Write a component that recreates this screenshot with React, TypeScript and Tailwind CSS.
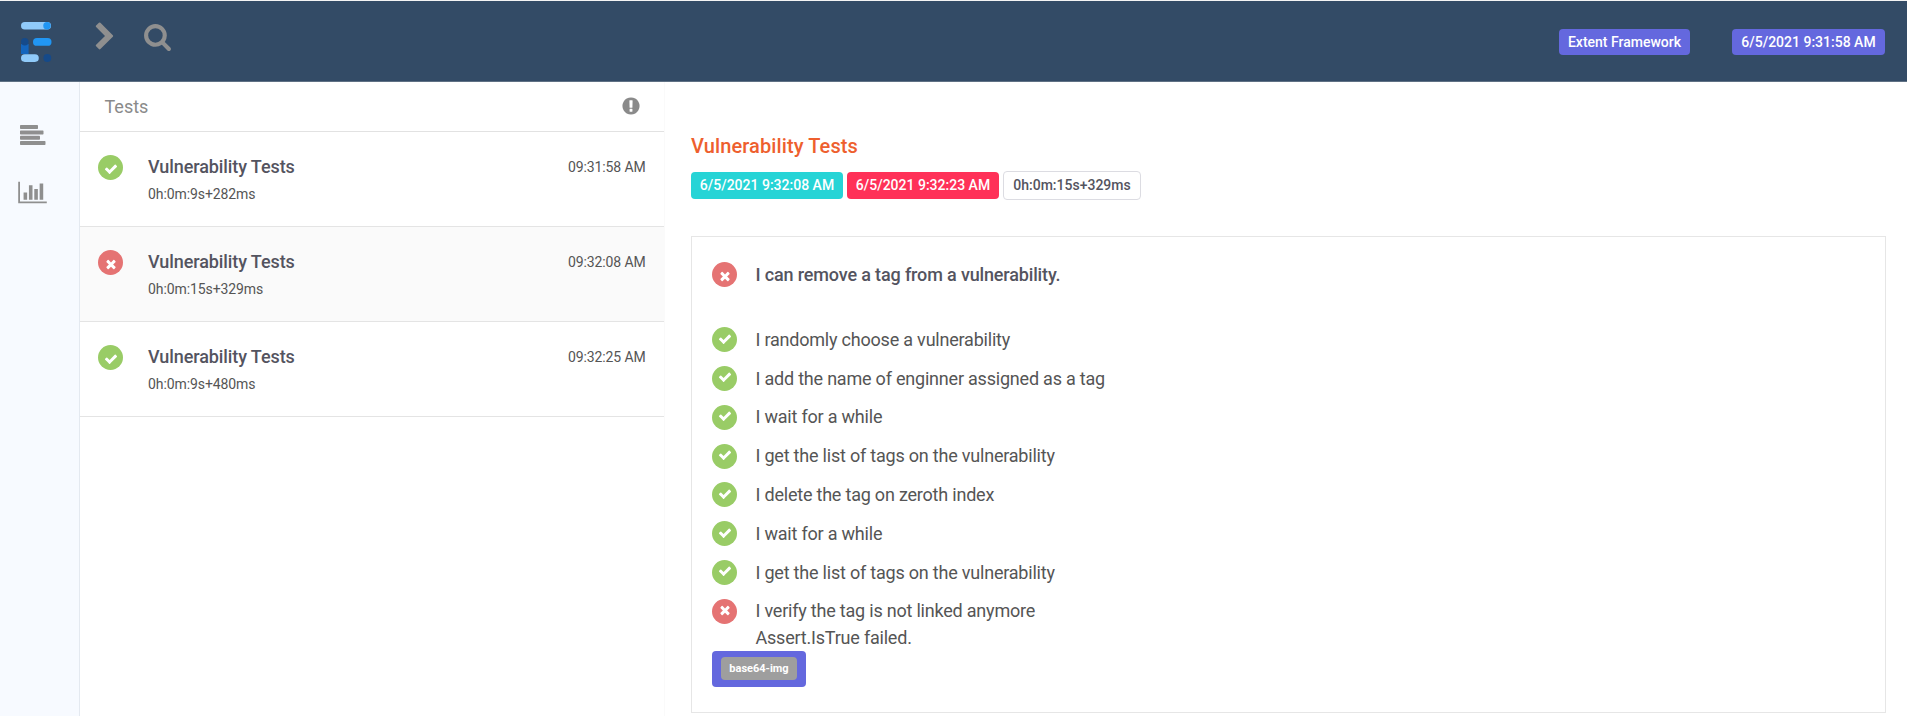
import type { ReactNode } from "react";

const CHECK =
  "M1671 566q0 40-28 68l-724 724-136 136q-28 28-68 28t-68-28l-136-136-362-362q-28-28-28-68t28-68l136-136q28-28 68-28t68 28l294 295 656-657q28-28 68-28t68 28l136 136q28 28 28 68z";
const TIMES =
  "M1490 1322q0 40-28 68l-136 136q-28 28-68 28t-68-28l-294-294-294 294q-28 28-68 28t-68-28l-136-136q-28-28-28-68t28-68l294-294-294-294q-28-28-28-68t28-68l136-136q28-28 68-28t68 28l294 294 294-294q28-28 68-28t68 28l136 136q28 28 28 68t-28 68l-294 294 294 294q28 28 28 68z";
const CHEVRON =
  "M1363 877l-742 742q-19 19-45 19t-45-19l-166-166q-19-19-19-45t19-45l531-531-531-531q-19-19-19-45t19-45l166-166q19-19 45-19t45 19l742 742q19 19 19 45t-19 45z";
const SEARCH =
  "M1216 832q0-185-131.5-316.5t-316.5-131.5-316.5 131.5-131.5 316.5 131.5 316.5 316.5 131.5 316.5-131.5 131.5-316.5zm512 832q0 52-38 90t-90 38q-54 0-90-38l-343-342q-179 124-399 124-143 0-273.5-55.5t-225-150-150-225-55.5-273.5 55.5-273.5 150-225 225-150 273.5-55.5 273.5 55.5 225 150 150 225 55.5 273.5q0 220-124 399l343 343q37 37 37 90z";
const ALERT =
  "M896 128q209 0 385.5 103t279.5 279.5 103 385.5-103 385.5-279.5 279.5-385.5 103-385.5-103-279.5-279.5-103-385.5 103-385.5 279.5-279.5 385.5-103zm128 1247v-190q0-14-9-23.5t-22-9.5h-192q-13 0-23 10t-10 23v190q0 13 10 23t23 10h192q13 0 22-9.5t9-23.5zm-2-344l18-621q0-12-10-18-10-8-24-8h-220q-14 0-24 8-10 6-10 18l17 621q0 10 10 17.5t24 7.5h185q14 0 23.5-7.5t10.5-17.5z";

type Status = "pass" | "fail";

function Glyph({ d, className }: { d: string; className: string }) {
  return (
    <svg viewBox="0 0 1792 1792" fill="currentColor" className={className}>
      <path d={d} />
    </svg>
  );
}

function StatusIcon({ status, lift = "" }: { status: Status; lift?: string }) {
  return (
    <span
      className={`flex size-[25px] shrink-0 items-center justify-center rounded-full text-white ${
        status === "pass" ? "bg-[#9c6]" : "bg-[#e57373]"
      }`}
    >
      <Glyph d={status === "pass" ? CHECK : TIMES} className={`size-[14px] ${lift}`} />
    </span>
  );
}

function Badge({ className, children }: { className: string; children: ReactNode }) {
  return (
    <span
      className={`flex items-center justify-center whitespace-nowrap rounded text-[14px] font-medium ${className}`}
    >
      {children}
    </span>
  );
}

function Logo() {
  return (
    <svg viewBox="0 0 32 42" className="h-[42px] w-8">
      <rect x="1" y="2" width="30" height="7.500" rx="3.750" fill="#90caf9" />
      <circle cx="27" cy="5.750" r="3.750" fill="#2196f3" />
      <rect x="13" y="18" width="18.500" height="7.800" rx="3.900" fill="#2196f3" />
      <rect x="1" y="24" width="7.600" height="10" fill="#1465bd" />
      <circle cx="4.800" cy="21.800" r="3.800" fill="#154a8a" />
      <rect x="1" y="34.200" width="17.800" height="7.700" rx="3.850" fill="#90caf9" />
      <circle cx="27.300" cy="38" r="3.900" fill="#154a8a" />
    </svg>
  );
}

const tests: { status: Status; time: string; duration: string }[] = [
  { status: "pass", time: "09:31:58 AM", duration: "0h:0m:9s+282ms" },
  { status: "fail", time: "09:32:08 AM", duration: "0h:0m:15s+329ms" },
  { status: "pass", time: "09:32:25 AM", duration: "0h:0m:9s+480ms" },
];

const steps: { status: Status; text: string; error?: string }[] = [
  { status: "pass", text: "I randomly choose a vulnerability" },
  { status: "pass", text: "I add the name of enginner assigned as a tag" },
  { status: "pass", text: "I wait for a while" },
  { status: "pass", text: "I get the list of tags on the vulnerability" },
  { status: "pass", text: "I delete the tag on zeroth index" },
  { status: "pass", text: "I wait for a while" },
  { status: "pass", text: "I get the list of tags on the vulnerability" },
  { status: "fail", text: "I verify the tag is not linked anymore", error: "Assert.IsTrue failed." },
];

export default function App() {
  return (
    <div className="flex h-[716px] w-full flex-col overflow-hidden bg-white font-[Roboto,sans-serif] text-[#555]">
      <header className="flex h-[82px] shrink-0 border-b border-t border-b-[#5f7184] border-t-[#f4f4f4] bg-[#334b66] pl-5 pr-[22px] text-[#8f8f8f]">
        <div className="pt-[19px]">
          <Logo />
        </div>
        <div className="pl-[38px] pt-[20.500px]">
          <Glyph d={CHEVRON} className="size-[30px]" />
        </div>
        <div className="pl-[23px] pt-[21px]">
          <Glyph d={SEARCH} className="size-[29px]" />
        </div>
        <div className="ml-auto flex gap-[42px] pt-7">
          <Badge className="h-[26px] w-[131px] bg-[#6468de] text-white">Extent Framework</Badge>
          <Badge className="h-[26px] w-[153px] bg-[#6468de] text-white">6/5/2021 9:31:58 AM</Badge>
        </div>
      </header>

      <div className="flex min-h-0 flex-1">
        <nav className="flex w-20 shrink-0 flex-col border-r border-[#e4e9f0] bg-[#f7faff] pl-[18px] pt-[43px] text-[#8f8f8f]">
          <svg viewBox="0 0 26 20" fill="currentColor" className="ml-0.5 h-5 w-[26px]">
            <rect y="0" width="18" height="4" rx="0.700" />
            <rect y="5.400" width="23.500" height="4" rx="0.700" />
            <rect y="10.800" width="20" height="4" rx="0.700" />
            <rect y="16" width="25.500" height="4" rx="0.700" />
          </svg>
          <svg viewBox="0 0 2048 1792" fill="currentColor" className="mt-[35px] h-[25px] w-[29px]">
            <path d="M640 896v512h-256v-512h256zm384-512v1024h-256v-1024h256zm1024 1152v128h-2048v-1536h128v1408h1920zm-640-896v768h-256v-768h256zm384-384v1152h-256v-1152h256z" />
          </svg>
        </nav>

        <aside className="w-[584px] shrink-0">
          <div className="flex h-[50px] items-center justify-between border-b border-[#e2e2e2] pb-px pl-[24.500px] pr-[23.500px] text-[18px] text-[#8a8a8a]">
            <span>Tests</span>
            <Glyph d={ALERT} className="size-5" />
          </div>
          {tests.map((test, i) => (
            <div
              key={i}
              className={`flex h-[95px] border-b border-[#e4e4e4] pl-[18px] pr-[18.500px] ${
                i === 1 ? "bg-[#fafafa]" : ""
              }`}
            >
              <div className="pt-[23px]">
                <StatusIcon status={test.status} lift="translate-y-px" />
              </div>
              <div className="flex-1 pl-[25px] pt-[22px]">
                <div className="text-[18px] font-medium leading-[26px] tracking-[-0.090px] text-[#54545f]">
                  Vulnerability Tests
                </div>
                <div className="mt-0.5 text-[14px] leading-6 tracking-[-0.090px]">{test.duration}</div>
              </div>
              <div className="pt-[23px] text-[14px] leading-6 tracking-[-0.120px]">{test.time}</div>
            </div>
          ))}
        </aside>

        <main className="flex-1 border-l border-[#fafafa] pl-[26px] pr-[21px] pt-[50px]">
          <h1 className="text-[20px] font-medium leading-[28px] tracking-[0.110px] text-[#ee5f2e]">
            Vulnerability Tests
          </h1>
          <div className="mt-[11px] flex h-[29px] items-center gap-1">
            <Badge className="h-[27px] w-[152px] bg-[#26d4d6] text-white">6/5/2021 9:32:08 AM</Badge>
            <Badge className="h-[27px] w-[152px] bg-[#ff3158] text-white">6/5/2021 9:32:23 AM</Badge>
            <Badge className="h-[29px] w-[138px] border border-[#dcdce2] text-[#54545f]">0h:0m:15s+329ms</Badge>
          </div>

          <section className="mt-9 h-[477px] border border-[#e6e6e6] pl-5 pt-[25px]">
            <div className="flex h-[65.150px] items-start">
              <StatusIcon status="fail" lift="translate-y-px" />
              <span className="pl-[18.500px] text-[18px] font-medium leading-[25px] tracking-[-0.150px] text-[#54545f]">
                I can remove a tag from a vulnerability.
              </span>
            </div>
            {steps.map((step, i) => (
              <div key={i} className="flex h-[38.800px] items-start">
                <StatusIcon status={step.status} lift="-translate-y-px" />
                <div className="-mt-[0.370px] pl-[18.500px] text-[18px] leading-[26px] tracking-[-0.210px]">
                  <div>{step.text}</div>
                  {step.error && <div className="pt-[0.700px]">{step.error}</div>}
                </div>
              </div>
            ))}
            <div className="mt-[13.330px] flex h-9 w-[94px] items-center justify-center rounded bg-[#6468de]">
              <span className="flex h-[23px] w-[76px] items-center justify-center rounded bg-[#9e9e9e] text-[11px] font-bold text-white">
                base64-img
              </span>
            </div>
          </section>
        </main>
      </div>
    </div>
  );
}
